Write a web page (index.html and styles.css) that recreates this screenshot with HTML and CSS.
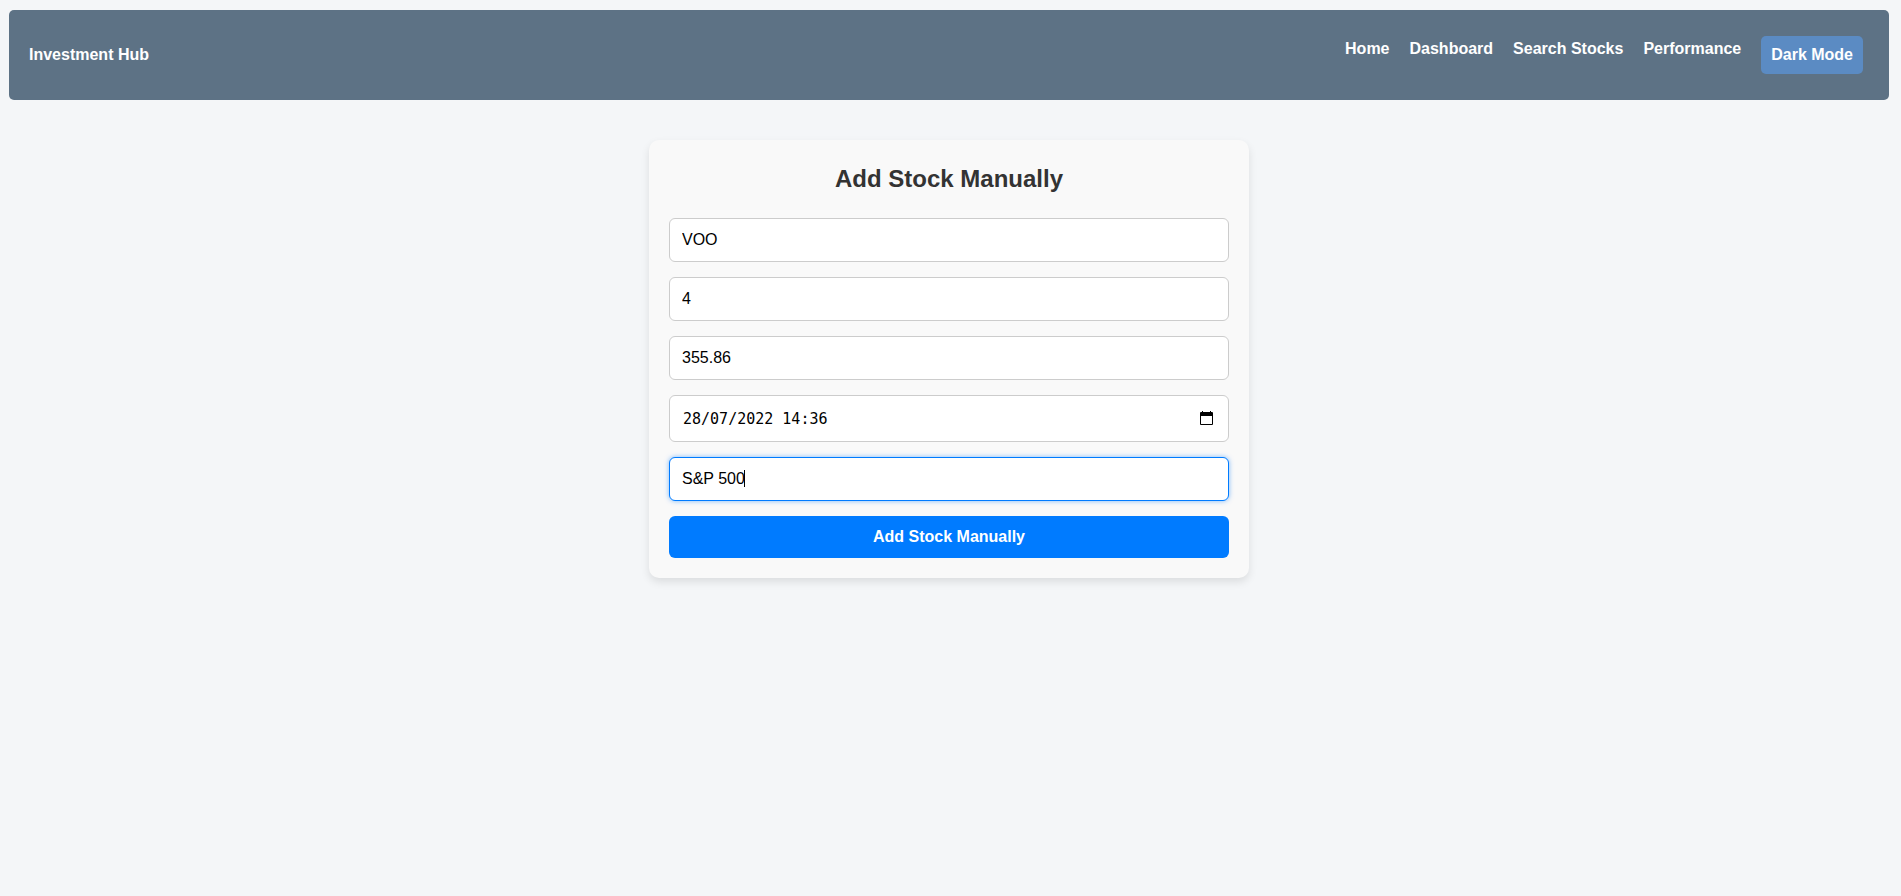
FILE: index.html
```html
<!DOCTYPE html>
<html lang="en-GB">
<head>
<meta charset="utf-8">
<title>Investment Hub</title>
<link rel="stylesheet" href="styles.css">
</head>
<body>
<header class="navbar">
  <a class="brand" href="#">Investment Hub</a>
  <nav class="nav-links">
    <a href="#">Home</a>
    <a href="#">Dashboard</a>
    <a href="#">Search Stocks</a>
    <a href="#">Performance</a>
    <button class="theme-toggle" type="button">Dark Mode</button>
  </nav>
</header>
<main>
  <form class="stock-form">
    <h2>Add Stock Manually</h2>
    <input class="field" type="text" aria-label="Ticker symbol" value="VOO">
    <input class="field" type="text" inputmode="numeric" aria-label="Quantity" value="4">
    <input class="field" type="text" inputmode="decimal" aria-label="Purchase price" value="355.86">
    <div class="field field-date">
      <input class="date-input" type="text" aria-label="Purchase date" value="28/07/2022 14:36">
      <button class="date-picker" type="button" aria-label="Show date picker">
        <svg width="13" height="15" viewBox="0 0 13 15" aria-hidden="true">
          <path d="M2 0h1v1h7V0h1v1h1q1 0 1 1v11q0 1-1 1H1q-1 0-1-1V2q0-1 1-1h1zM1 5v8h11V5z" fill="#000" fill-rule="evenodd"/>
        </svg>
      </button>
    </div>
    <div class="field-focus">
      <input class="field active" type="text" aria-label="Stock name" value="S&amp;P 500">
      <span class="caret" aria-hidden="true"></span>
    </div>
    <button class="submit" type="submit">Add Stock Manually</button>
  </form>
</main>
</body>
</html>
```
FILE: styles.css
```css
* { box-sizing: border-box; }
body {
  margin: 10px 12px 0 9px;
  background: #f4f6f8;
  font: 16px/26px "Liberation Sans", Arial, sans-serif;
  color: #333;
}
.navbar {
  display: flex;
  justify-content: space-between;
  align-items: center;
  padding: 26px 26px 26px 20px;
  border-radius: 5px;
  background: #5d7285;
}
.navbar a {
  color: #fff;
  font-weight: bold;
  text-decoration: none;
}
.nav-links {
  display: flex;
  align-items: flex-start;
  gap: 20px;
}
.theme-toggle,
.submit {
  border: 0;
  border-radius: 5px;
  color: #fff;
  font: bold 16px/18px "Liberation Sans", Arial, sans-serif;
  cursor: pointer;
}
.theme-toggle {
  padding: 10px;
  background: #5b8bc3;
}
.stock-form {
  display: flex;
  flex-direction: column;
  gap: 15px;
  max-width: 600px;
  margin: 40px auto;
  padding: 20px;
  border-radius: 10px;
  background: #f9f9f9;
  box-shadow: 0 4px 8px rgba(0, 0, 0, 0.1);
}
.stock-form h2 {
  margin: 0 0 5px;
  font-size: 24px;
  line-height: 38px;
  text-align: center;
}
.field {
  display: block;
  width: 100%;
  padding: 12px;
  border: 1px solid #ccc;
  border-radius: 6px;
  background: #fff;
  color: #000;
  font: 16px/18px "Liberation Sans", Arial, sans-serif;
  outline: 0;
}
.field-date {
  display: flex;
  align-items: center;
  padding-right: 15px;
}
.date-input {
  flex: 1;
  min-width: 0;
  padding: 2px 1px 0;
  border: 0;
  background: none;
  color: #000;
  font: 15px/19px "DejaVu Sans Mono", monospace;
  outline: 0;
}
.date-picker {
  display: flex;
  padding: 0;
  border: 0;
  background: none;
  cursor: pointer;
}
.field-focus {
  position: relative;
}
.field.active {
  border-color: #007bff;
  box-shadow: 0 0 5px rgba(0, 123, 255, 0.5);
}
.caret {
  position: absolute;
  top: 13px;
  left: 75px;
  width: 1px;
  height: 17px;
  background: #000;
}
.submit {
  padding: 12px;
  border-radius: 6px;
  background: #007bff;
}
```
